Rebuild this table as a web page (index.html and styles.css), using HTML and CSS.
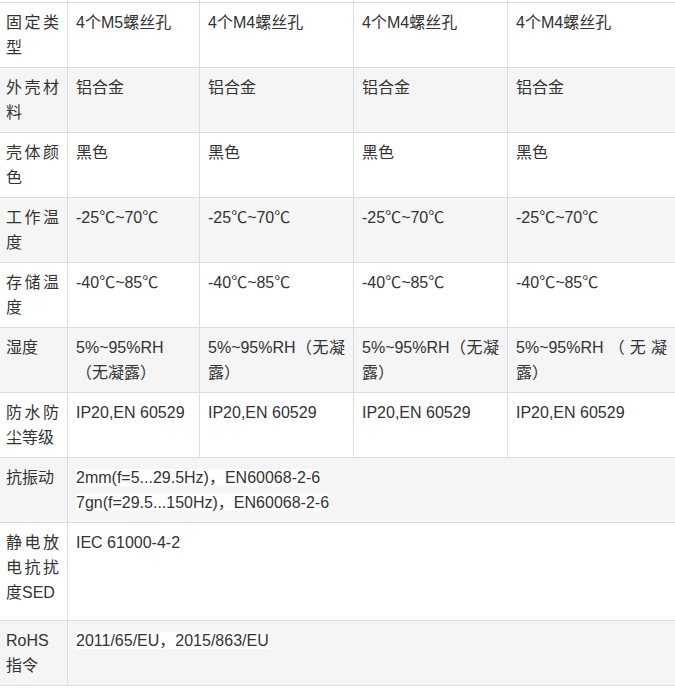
FILE: index.html
```html
<!DOCTYPE html>
<html lang="zh-CN">
<head>
<meta charset="utf-8">
<title>规格参数</title>
<link rel="stylesheet" href="styles.css">
</head>
<body>
<table class="spec">
  <colgroup>
    <col class="c0"><col class="c1"><col class="c2"><col class="c3"><col class="c4">
  </colgroup>
  <tbody>
    <tr class="cut"><td></td><td></td><td></td><td></td><td></td></tr>
    <tr>
      <td>固定类型</td><td>4个M5螺丝孔</td><td>4个M4螺丝孔</td><td>4个M4螺丝孔</td><td>4个M4螺丝孔</td>
    </tr>
    <tr class="alt">
      <td>外壳材料</td><td>铝合金</td><td>铝合金</td><td>铝合金</td><td>铝合金</td>
    </tr>
    <tr>
      <td>壳体颜色</td><td>黑色</td><td>黑色</td><td>黑色</td><td>黑色</td>
    </tr>
    <tr class="alt">
      <td>工作温度</td><td>-25℃~70℃</td><td>-25℃~70℃</td><td>-25℃~70℃</td><td>-25℃~70℃</td>
    </tr>
    <tr>
      <td>存储温度</td><td>-40℃~85℃</td><td>-40℃~85℃</td><td>-40℃~85℃</td><td>-40℃~85℃</td>
    </tr>
    <tr class="alt">
      <td>湿度</td><td>5%~95%RH（无凝露）</td><td>5%~95%RH（无凝露）</td><td>5%~95%RH（无凝露）</td><td>5%~95%RH（无凝露）</td>
    </tr>
    <tr>
      <td>防水防尘等级</td><td>IP20,EN 60529</td><td>IP20,EN 60529</td><td>IP20,EN 60529</td><td>IP20,EN 60529</td>
    </tr>
    <tr class="alt">
      <td>抗振动</td>
      <td colspan="4"><span class="hl">2mm(f=5...29.5Hz)，EN60068-2-6</span><br><span class="hl">7gn(f=29.5...150Hz)，EN60068-2-6</span></td>
    </tr>
    <tr class="tall">
      <td>静电放电抗扰度SED</td><td colspan="4">IEC 61000-4-2</td>
    </tr>
    <tr class="alt">
      <td>RoHS指令</td><td colspan="4"><span class="hl">2011/65/EU，2015/863/EU</span></td>
    </tr>
  </tbody>
</table>
</body>
</html>
```

FILE: styles.css
```css
html, body {
  margin: 0;
  padding: 0;
  background: #fff;
}

body {
  font-family: "Liberation Sans", "Noto Sans CJK SC", sans-serif;
  font-size: 16px;
  line-height: 25px;
  color: #333;
}

.spec {
  border-collapse: collapse;
  table-layout: fixed;
  width: 678px;
  margin-left: -3px;
  margin-top: -8px;
}

.spec .c0 { width: 70px; }
.spec .c1 { width: 132px; }
.spec .c2 { width: 154px; }
.spec .c3 { width: 154px; }
.spec .c4 { width: 168px; }

.spec td {
  border: 1px solid #ddd;
  padding: 7px 8px;
  vertical-align: top;
  text-align: justify;
  word-break: normal;
}

.spec .cut td {
  height: 9px;
  padding: 0;
}

.spec .alt td {
  background: #f5f5f5;
}

.spec .tall td {
  padding-bottom: 15px;
}

.hl {
  background: #fff;
}
```
